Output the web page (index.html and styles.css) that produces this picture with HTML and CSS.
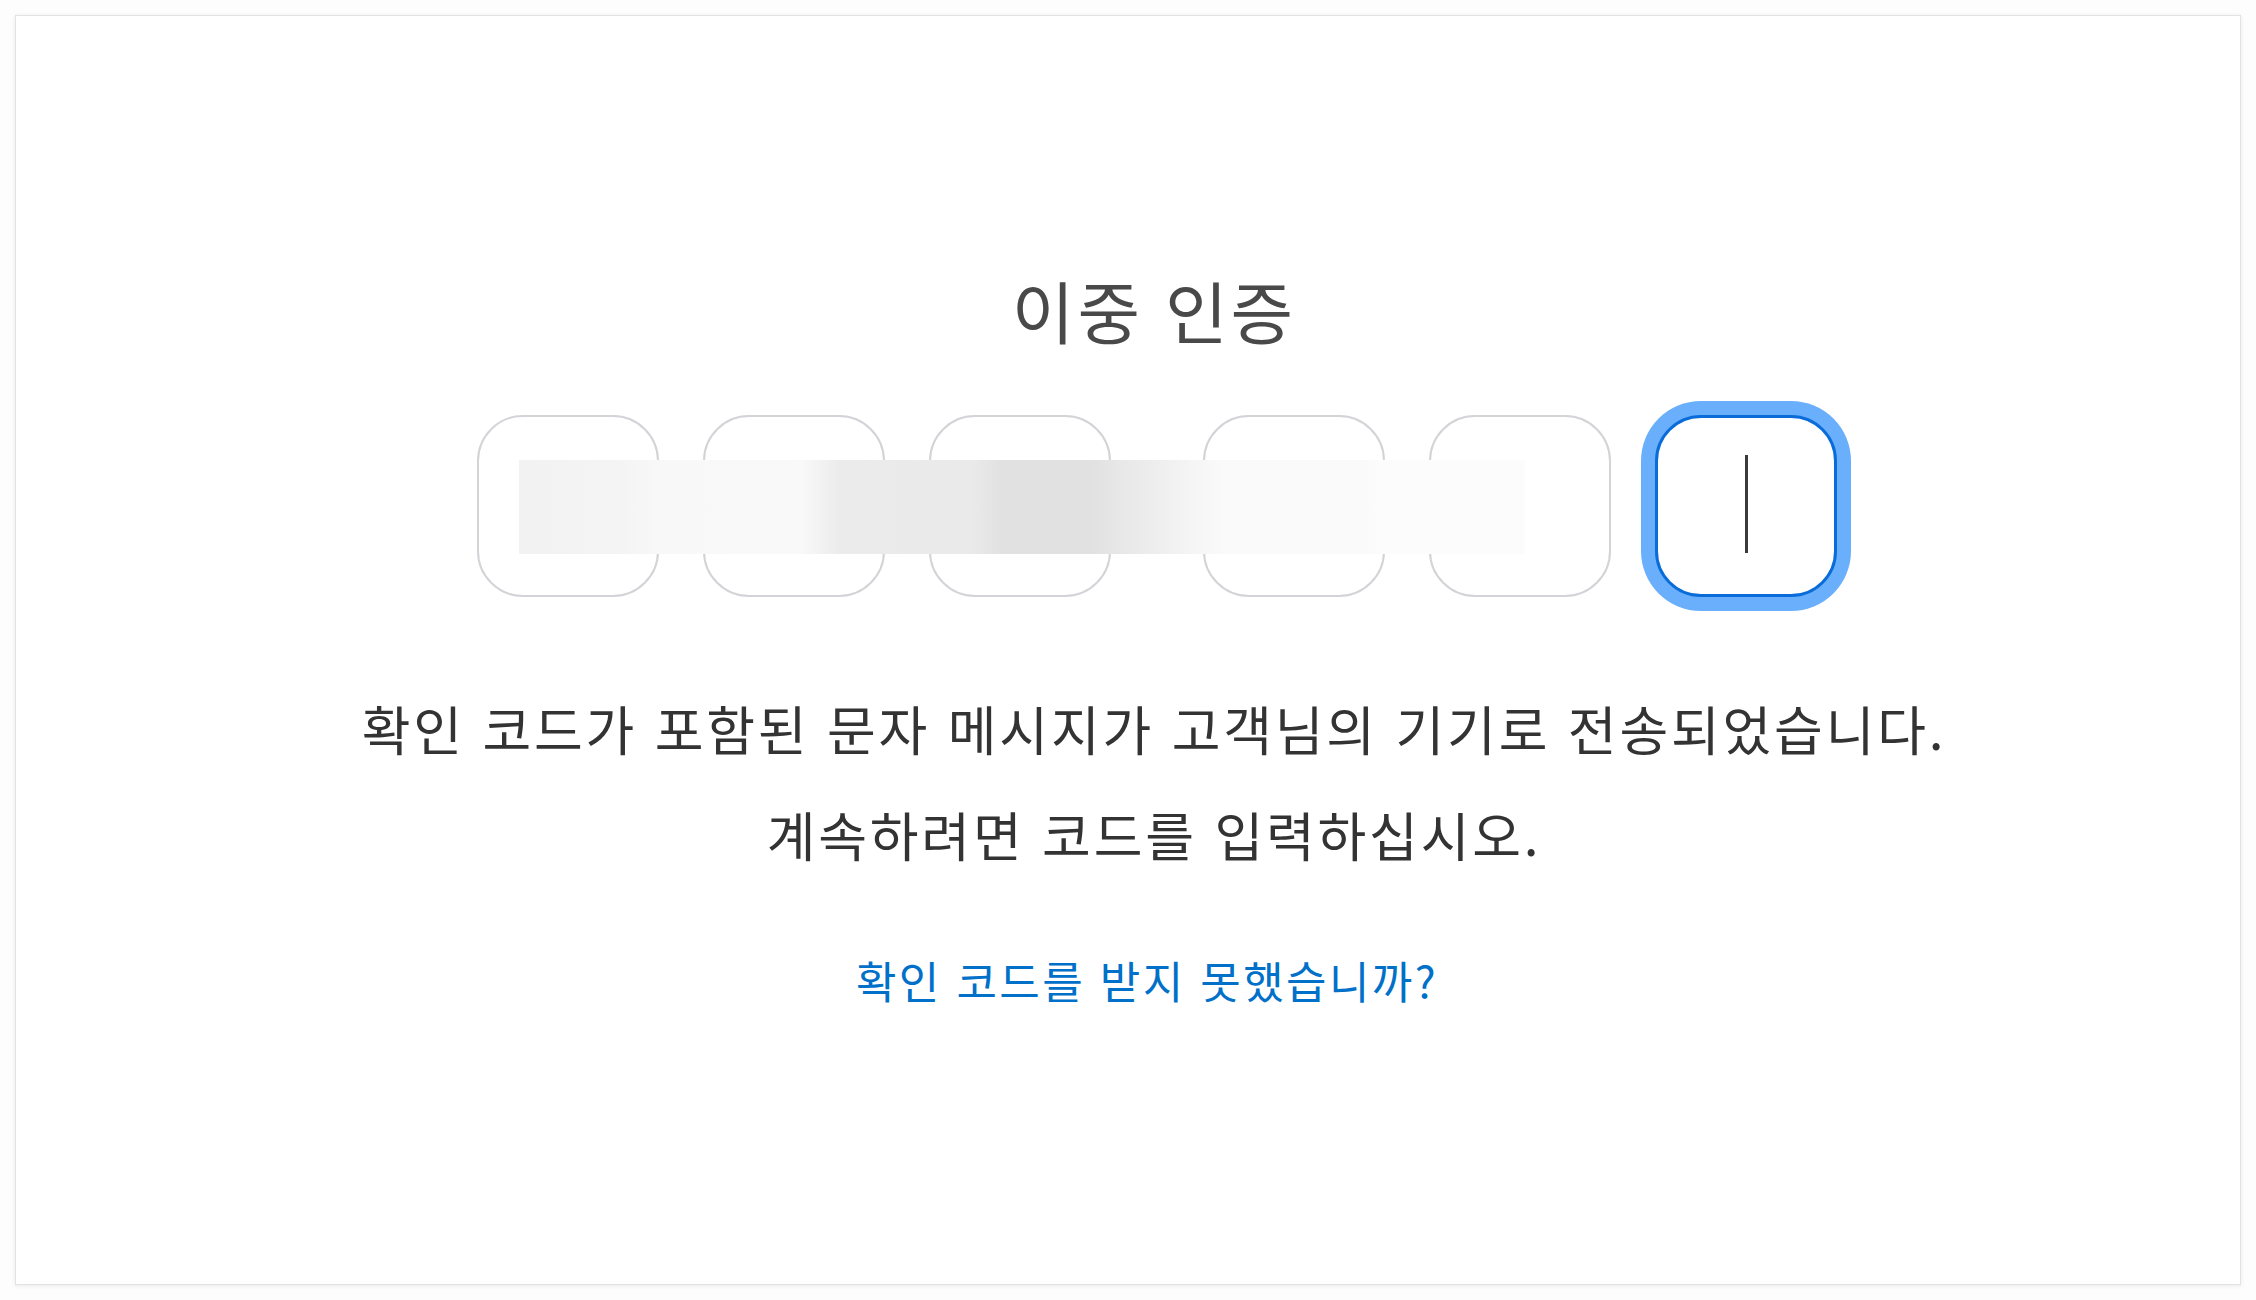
FILE: index.html
```html
<!DOCTYPE html>
<html lang="ko">
<head>
  <meta charset="UTF-8" />
  <title>이중 인증</title>
  <meta name="viewport" content="width=device-width, initial-scale=1.0" />
  <link rel="stylesheet" href="styles.css">
</head>
<body>
  <div class="card">
    <h1 class="title">이중 인증</h1>

    <div class="code-row">
      <div class="code-group">
        <div class="digit"></div>
        <div class="digit"></div>
        <div class="digit"></div>
      </div>
      <div class="code-group">
        <div class="digit"></div>
        <div class="digit"></div>
        <div class="digit focused"><span class="caret"></span></div>
      </div>
      <div class="redacted"></div>
    </div>

    <p class="message">확인 코드가 포함된 문자 메시지가 고객님의 기기로 전송되었습니다.<br>계속하려면 코드를 입력하십시오.</p>

    <a class="resend" href="#">확인 코드를 받지 못했습니까?</a>
  </div>
</body>
</html>
```

FILE: styles.css
```css
html, body {
  height: 100%;
}

body {
  margin: 0;
  padding: 15px;
  box-sizing: border-box;
  background-color: #fdfdfd;
  font-family: "Noto Sans CJK KR", "Noto Sans", sans-serif;
}

.card {
  height: 100%;
  box-sizing: border-box;
  background-color: #ffffff;
  border: 1px solid #e2e2e2;
  box-shadow: 0 1px 5px rgba(0, 0, 0, 0.08);
  display: flex;
  flex-direction: column;
  align-items: center;
  padding-top: 254px;
  padding-left: 52px;
}

.title {
  margin: 0;
  font-size: 68px;
  line-height: 80px;
  font-weight: 400;
  letter-spacing: 3px;
  color: #494949;
}

.code-row {
  position: relative;
  display: flex;
  gap: 92px;
  margin-top: 65px;
  margin-left: 6px;
}

.code-group {
  display: flex;
  gap: 44px;
}

.digit {
  width: 182px;
  height: 182px;
  box-sizing: border-box;
  border: 2px solid #d3d3d8;
  border-radius: 46px;
  background-color: #ffffff;
  display: flex;
  justify-content: center;
  align-items: center;
}

.digit.focused {
  border: 3px solid #0a6cd9;
  box-shadow: 0 0 0 14px #6aaffc;
}

.caret {
  display: block;
  width: 3px;
  height: 98px;
  margin-top: -4px;
  background-color: #3a3a3a;
}

/* blurred-out digits */
.redacted {
  position: absolute;
  left: 42px;
  top: 45px;
  width: 1006px;
  height: 94px;
  background: linear-gradient(to right,
    #f2f2f2 0%, #f4f4f4 10%,
    #f8f8f8 14%, #f9f9f9 28%,
    #ebebeb 32%, #eaeaea 45%,
    #e1e1e1 48%, #e1e1e1 57%,
    #e8e8e8 60%, #efefef 64%,
    #f5f5f5 67%, #fafafa 70%,
    #fafafa 84%, #fcfcfc 86%, #fcfcfc 100%);
}

.message {
  margin: 78px 0 0;
  font-size: 53px;
  line-height: 106px;
  letter-spacing: 2.8px;
  color: #333333;
  text-align: center;
}

.resend {
  margin-top: 63px;
  padding-right: 14px;
  font-size: 44px;
  line-height: 60px;
  letter-spacing: 2.4px;
  color: #0070c9;
  text-decoration: none;
}
```
